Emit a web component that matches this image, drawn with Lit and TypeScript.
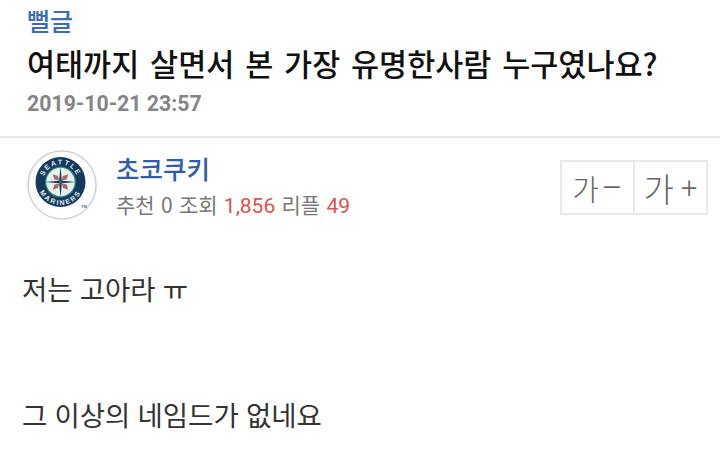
import { LitElement, html, css, svg } from "lit";
import { customElement } from "lit/decorators.js";

@customElement("app-root")
export class AppRoot extends LitElement {
  static styles = css`
    :host {
      display: block;
      width: 720px;
      height: 452px;
      overflow: hidden;
      background: #fff;
      font-family: "Noto Sans CJK KR", "Roboto", sans-serif;
    }
    .head {
      height: 138px;
      box-sizing: border-box;
      padding: 2px 27px 0;
      border-bottom: 2px solid #e8e8e8;
      display: flex;
      flex-direction: column;
    }
    .cat {
      font-size: 25px;
      line-height: 36px;
      font-weight: 500;
      color: #3b6cb4;
    }
    .title {
      font-size: 30.5px;
      line-height: 44px;
      margin-top: 3px;
      font-weight: 500;
      word-spacing: 4px;
      color: #111;
      white-space: nowrap;
    }
    .date {
      font-family: "Roboto", sans-serif;
      font-size: 21.3px;
      line-height: 28px;
      margin-top: 5px;
      font-weight: 700;
      color: #858585;
    }
    .meta {
      display: flex;
      align-items: flex-start;
      padding: 12px 12px 0 27px;
    }
    .avatar {
      width: 70px;
      height: 70px;
      flex: none;
    }
    .info {
      margin-left: 20px;
      flex: 1;
    }
    .nick {
      font-size: 25.5px;
      line-height: 36px;
      margin-left: -1px;
      font-weight: 500;
      color: #2f5ea8;
    }
    .stats {
      font-size: 21px;
      line-height: 30px;
      margin-top: 3px;
      margin-left: -1px;
      word-spacing: 1.6px;
      color: #777;
      white-space: nowrap;
    }
    .stats b {
      font-family: "Roboto", sans-serif;
      font-weight: 400;
      color: #d9534f;
    }
    .btns {
      display: flex;
      margin-top: 10px;
      border: 2px solid #e8e8e8;
      height: 55px;
      width: 148px;
      box-sizing: border-box;
    }
    .btn {
      flex: 1;
      display: flex;
      align-items: center;
      justify-content: center;
      gap: 2px;
      color: #666;
      font-size: 29px;
      font-weight: 300;
    }
    .btn + .btn {
      border-left: 2px solid #e8e8e8;
      font-size: 33px;
      gap: 7px;
    }
    .sign {
      font-family: "Roboto", sans-serif;
      font-weight: 300;
      font-size: 38px;
    }
    .btn + .btn .sign {
      font-size: 29px;
    }
    .body {
      padding: 0 22px;
      margin-top: 45px;
      font-size: 27.5px;
      line-height: 44px;
      word-spacing: 1px;
      color: #333;
    }
    .body p {
      margin: 0;
    }
    .body p + p {
      margin-top: 82px;
    }
    .ring {
      font-family: "Liberation Sans", sans-serif;
      font-size: 7px;
      font-weight: 700;
      fill: #e6ecef;
      letter-spacing: 1.7px;
    }
    .tm {
      font-family: "Liberation Sans", sans-serif;
      font-size: 4px;
      font-weight: 700;
      fill: #5d6f86;
    }
  `;

  logo() {
    const cx = 33.5;
    const cy = 32;
    const rot = (a: number) => `rotate(${a} ${cx} ${cy})`;
    return html`<svg class="avatar" viewBox="0 0 70 70">
      <circle cx="35" cy="35" r="34" fill="#fff" stroke="#d2d2d2" stroke-width="1.6" />
      <defs>
        <path id="top" d="M${cx - 17.5} ${cy} A17.5 17.5 0 0 1 ${cx + 17.5} ${cy}" />
        <path id="bot" d="M${cx - 23} ${cy} A23 23 0 0 0 ${cx + 23} ${cy}" />
      </defs>
      <circle cx=${cx} cy=${cy} r="25" fill="#123a5e" />
      <text class="ring"><textPath href="#top" startOffset="50%" text-anchor="middle">SEATTLE</textPath></text>
      <text class="ring"><textPath href="#bot" startOffset="50%" text-anchor="middle">MARINERS</textPath></text>
      <circle cx=${cx} cy=${cy} r="15.5" fill="#2a8578" />
      <circle cx=${cx} cy=${cy} r="14.2" fill="#e6f1ec" />
      ${[45, 135, 225, 315].map(
        (a) => svg`<path d="M${cx} ${cy - 11} L${cx + 2.6} ${cy - 6} L${cx} ${cy - 2} L${cx - 2.6} ${cy - 6} Z" fill="#b0656d" transform=${rot(a)} />`
      )}
      ${[0, 90, 180, 270].map(
        (a) => svg`<path d="M${cx} ${cy - 15.5} L${cx + 1.3} ${cy - 1.5} L${cx} ${cy} L${cx - 1.3} ${cy - 1.5} Z" fill="#123a5e" transform=${rot(a)} />`
      )}
      <text class="tm" x="54" y="58">TM</text>
    </svg>`;
  }

  render() {
    return html`
      <div class="head">
        <div class="cat">뻘글</div>
        <div class="title">여태까지 살면서 본 가장 유명한사람 누구였나요?</div>
        <div class="date">2019-10-21 23:57</div>
      </div>
      <div class="meta">
        ${this.logo()}
        <div class="info">
          <div class="nick">초코쿠키</div>
          <div class="stats">추천 0 조회 <b>1,856</b> 리플 <b>49</b></div>
        </div>
        <div class="btns">
          <div class="btn">가<span class="sign">−</span></div>
          <div class="btn">가<span class="sign">+</span></div>
        </div>
      </div>
      <div class="body">
        <p>저는 고아라 ㅠ</p>
        <p>그 이상의 네임드가 없네요</p>
      </div>
    `;
  }
}
